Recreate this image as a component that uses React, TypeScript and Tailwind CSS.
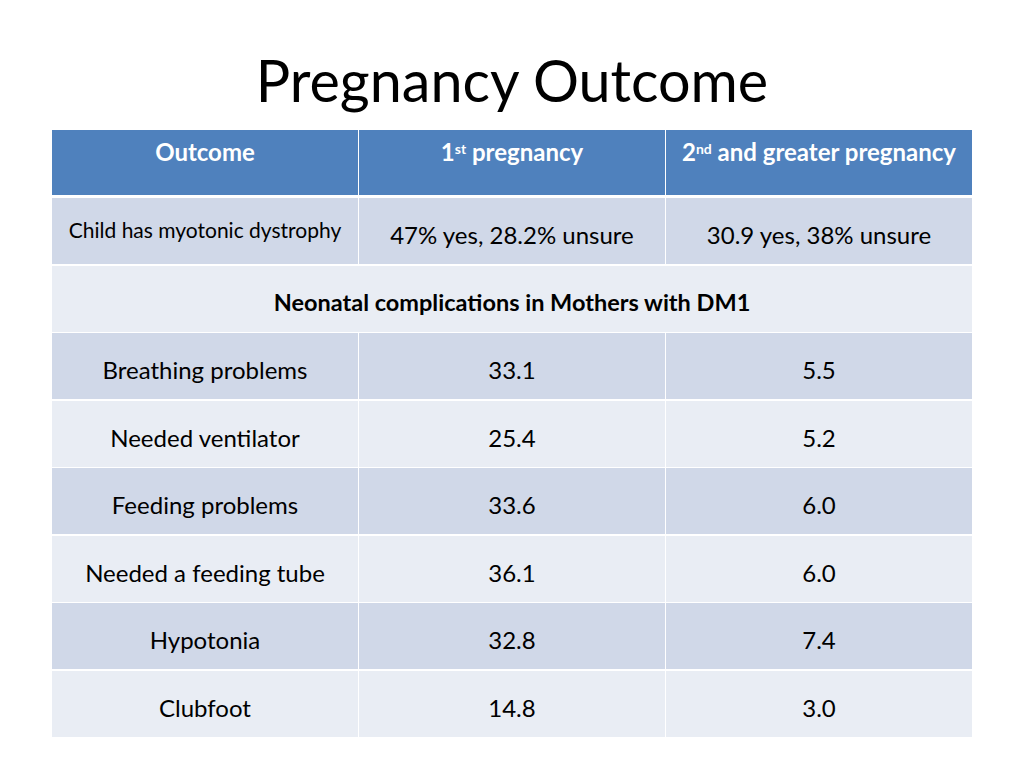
import React from "react";

const font = { fontFamily: "Lato, 'Open Sans', sans-serif" };

type Row = { label: string; first: string; second: string };

const rows: Row[] = [
  { label: "Breathing problems", first: "33.1", second: "5.5" },
  { label: "Needed ventilator", first: "25.4", second: "5.2" },
  { label: "Feeding problems", first: "33.6", second: "6.0" },
  { label: "Needed a feeding tube", first: "36.1", second: "6.0" },
  { label: "Hypotonia", first: "32.8", second: "7.4" },
  { label: "Clubfoot", first: "14.8", second: "3.0" },
];

const Cell = ({ children, dark, small }: { children: React.ReactNode; dark: boolean; small?: boolean }) => (
  <div
    className={`flex items-center justify-center text-black ${
      small ? "pb-[2px] text-[21px]" : "pt-[8px] text-[24px]"
    } ${dark ? "bg-[#d0d8e8]" : "bg-[#e9edf4]"}`}
  >
    {children}
  </div>
);

export default function App() {
  return (
    <div className="w-[1024px] h-[768px] bg-white flex flex-col items-center" style={font}>
      {/* Title */}
      <h1 className="mt-[46px] h-[84px] text-[57.5px] leading-[68px] text-black">Pregnancy Outcome</h1>

      {/* Table */}
      <div className="w-[920px] flex flex-col bg-white">
        <div className="grid grid-cols-[306px_306px_306px] gap-x-[1px] h-[65px]">
          <div className="bg-[#4f81bd] flex justify-center pt-[4px] text-white font-bold text-[24px]">
            <span>Outcome</span>
          </div>
          <div className="bg-[#4f81bd] flex justify-center pt-[4px] text-white font-bold text-[24px]">
            <span>
              1<sup className="text-[14px]">st</sup> pregnancy
            </span>
          </div>
          <div className="bg-[#4f81bd] flex justify-center pt-[4px] text-white font-bold text-[24px]">
            <span>
              2<sup className="text-[14px]">nd</sup> and greater pregnancy
            </span>
          </div>
        </div>

        <div className="mt-[3px] flex flex-col gap-y-[1.5px]">
          <div className="grid grid-cols-[306px_306px_306px] gap-x-[1px] h-[66px]">
            <Cell dark small>
              Child has myotonic dystrophy
            </Cell>
            <Cell dark>47% yes, 28.2% unsure</Cell>
            <Cell dark>30.9 yes, 38% unsure</Cell>
          </div>

          <div className="h-[66px] bg-[#e9edf4] flex items-center justify-center pt-[8px] text-[23.5px] font-bold text-black">
            Neonatal complications in Mothers with DM1
          </div>

          {rows.map((r, i) => {
            const dark = i % 2 === 0;
            return (
              <div key={r.label} className="grid grid-cols-[306px_306px_306px] gap-x-[1px] h-[66px]">
                <Cell dark={dark}>{r.label}</Cell>
                <Cell dark={dark}>{r.first}</Cell>
                <Cell dark={dark}>{r.second}</Cell>
              </div>
            );
          })}
        </div>
      </div>
    </div>
  );
}
